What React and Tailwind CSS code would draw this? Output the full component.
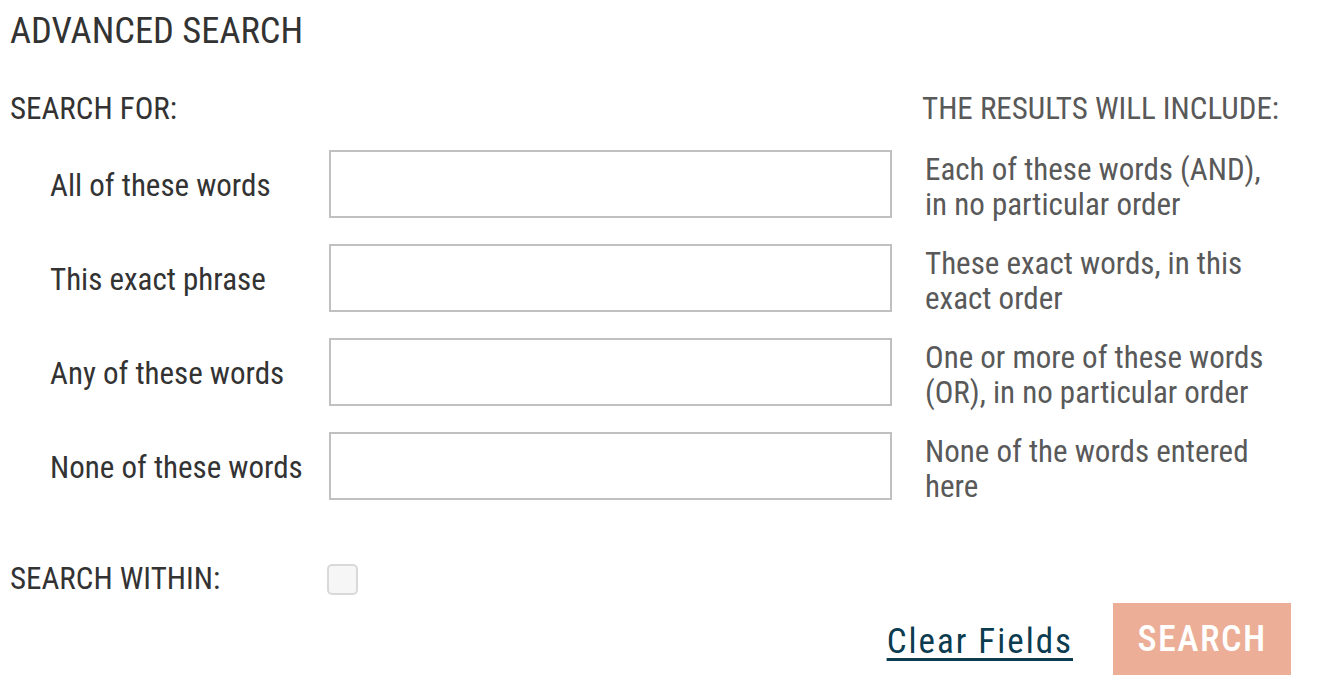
import { useState } from "react";

// Search field rows: label, input name, what the results include
const FIELDS = [
  {
    id: "all",
    label: "All of these words",
    hint: ["Each of these words (AND),", "in no particular order"],
  },
  {
    id: "exact",
    label: "This exact phrase",
    hint: ["These exact words, in this", "exact order"],
  },
  {
    id: "any",
    label: "Any of these words",
    hint: ["One or more of these words", "(OR), in no particular order"],
  },
  {
    id: "none",
    label: "None of these words",
    hint: ["None of the words entered", "here"],
  },
];

const EMPTY = { all: "", exact: "", any: "", none: "" };

export default function App() {
  const [values, setValues] = useState(EMPTY);
  const [within, setWithin] = useState(false);

  const updateField = (id, value) => {
    setValues((prev) => ({ ...prev, [id]: value }));
  };

  return (
    <div className="min-h-screen bg-white pl-[10px] pt-[11px] font-['Roboto',sans-serif] font-stretch-condensed text-[#333]">
      <div className="w-[1281px]">
        {/* Title */}
        <h1 className="text-[36.5px] leading-[40px] font-normal">ADVANCED SEARCH</h1>

        {/* Column headers */}
        <div className="mt-[40px] grid grid-cols-[912px_1fr] text-[31px] leading-[36px]">
          <div>SEARCH FOR:</div>
          <div className="text-[#595959]">THE RESULTS WILL INCLUDE:</div>
        </div>

        {/* Field rows */}
        <div className="mt-[23px] flex flex-col gap-[26px]">
          {FIELDS.map((field) => (
            <div key={field.id} className="grid h-[68px] grid-cols-[319px_563px_1fr]">
              <label
                htmlFor={field.id}
                className="flex items-center pl-[40px] text-[31px] leading-[36px] whitespace-nowrap"
              >
                {field.label}
              </label>
              <input
                id={field.id}
                type="text"
                value={values[field.id]}
                onChange={(e) => updateField(field.id, e.target.value)}
                className="h-[68px] w-[563px] border-2 border-[#c0c0c0] bg-white px-3 text-[26px] outline-none"
              />
              <p className="pl-[33px] pt-[2px] text-[31px] leading-[35px] whitespace-nowrap text-[#595959]">
                {field.hint[0]}
                <br />
                {field.hint[1]}
              </p>
            </div>
          ))}
        </div>

        {/* Search within */}
        <div className="mt-[61px] flex items-center">
          <span className="w-[317px] text-[31px] leading-[36px]">SEARCH WITHIN:</span>
          <button
            type="button"
            aria-pressed={within}
            onClick={() => setWithin(!within)}
            className="h-[31px] w-[31px] rounded-[5px] border-2 border-[#d9d9d9] bg-[#f6f6f6]"
          />
        </div>

        {/* Actions */}
        <div className="mt-[6px] flex items-center justify-end gap-[40px]">
          <button
            type="button"
            onClick={() => setValues(EMPTY)}
            className="pt-[6px] text-[35px] leading-[40px] tracking-[2px] text-[#0b3c4f] underline decoration-[3px] underline-offset-[5px]"
          >
            Clear Fields
          </button>
          <button
            type="submit"
            className="flex h-[72px] w-[178px] items-center justify-center bg-[#ecae96] text-[36px] font-medium tracking-[1.5px] text-white"
          >
            SEARCH
          </button>
        </div>
      </div>
    </div>
  );
}
